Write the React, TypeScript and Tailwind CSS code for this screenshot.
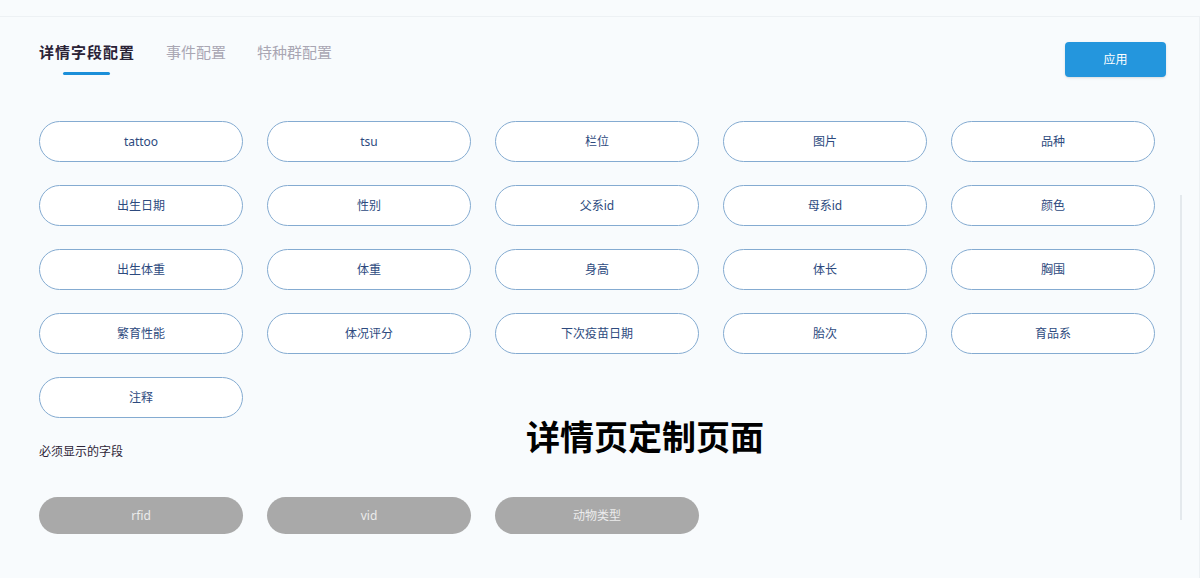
import React from 'react';

const fields = [
  'tattoo', 'tsu', '栏位', '图片', '品种',
  '出生日期', '性别', '父系id', '母系id', '颜色',
  '出生体重', '体重', '身高', '体长', '胸围',
  '繁育性能', '体况评分', '下次疫苗日期', '胎次', '育品系',
  '注释',
];

const required = ['rfid', 'vid', '动物类型'];

const tabs = ['详情字段配置', '事件配置', '特种群配置'];

export default function App() {
  return (
    <div
      className="relative w-[1200px] h-[578px] overflow-hidden bg-[#f8fbfd] pt-4"
      style={{ fontFamily: '"Noto Sans", "Noto Sans CJK SC", sans-serif' }}
    >
      <div className="h-full border-t border-r border-[#edf1f4] pl-[39px] pr-[33px] pt-[25px]">
        {/* header */}
        <div className="flex items-start justify-between">
          <div className="flex gap-[31px]">
            {tabs.map((t, i) => (
              <div key={t} className="flex flex-col">
                <span
                  className={
                    i === 0
                      ? 'text-[15px] leading-5 font-bold tracking-[1px] text-[#2a2236]'
                      : 'text-[15px] leading-5 text-[#a9a6b3]'
                  }
                >
                  {t}
                </span>
                {i === 0 && <div className="ml-6 mt-[10px] h-[3px] w-[47px] rounded-full bg-[#1b8fd9]" />}
              </div>
            ))}
          </div>
          <button className="h-[35px] w-[101px] rounded bg-[#2496dd] text-xs text-white shadow-sm">
            应用
          </button>
        </div>

        {/* field pills */}
        <div className="mt-[44px] grid grid-cols-[repeat(5,204px)] gap-x-6 gap-y-[23px]">
          {fields.map((f) => (
            <div
              key={f}
              className="flex h-[41px] items-center justify-center rounded-full border border-[#84abd1] bg-white text-xs text-[#2d4a7e]"
            >
              {f}
            </div>
          ))}
        </div>

        <p className="mt-[26px] text-xs leading-4 text-[#2e2538]">必须显示的字段</p>

        <div className="mt-[37px] flex gap-6">
          {required.map((r) => (
            <div
              key={r}
              className="flex h-[37px] w-[204px] items-center justify-center rounded-full bg-[#a9a9a9] text-xs text-[#ececec]"
            >
              {r}
            </div>
          ))}
        </div>
      </div>

      {/* scrollbar track */}
      <div className="absolute left-[1180px] top-[195px] h-[325px] w-[2px] bg-[#e4e9ed]" />

      {/* overlay caption */}
      <div className="absolute left-[526px] top-[413px] text-[34px] font-bold leading-[48px] text-black">
        详情页定制页面
      </div>
    </div>
  );
}
